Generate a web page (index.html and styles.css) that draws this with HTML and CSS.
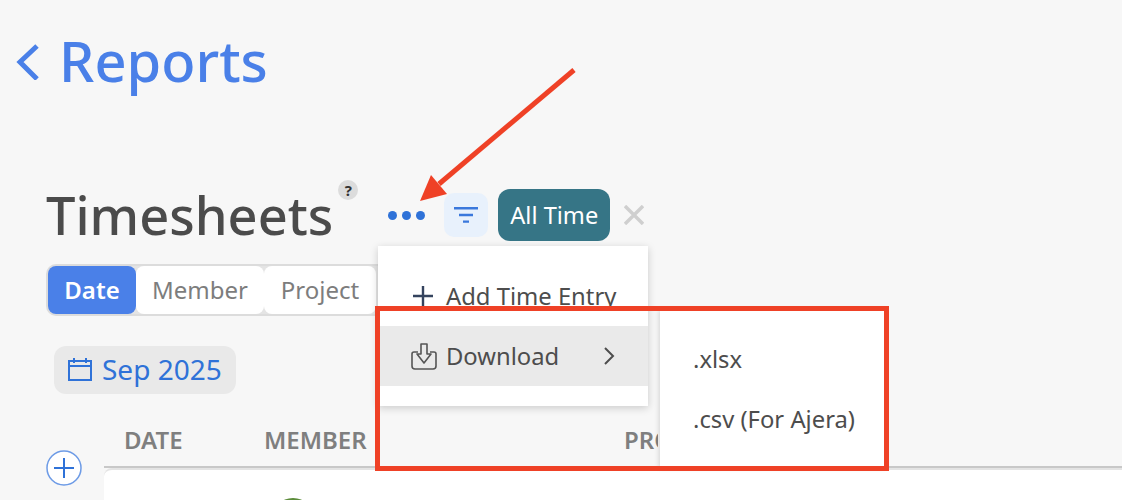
FILE: index.html
```html
<!DOCTYPE html>
<html lang="en">
<head>
  <meta charset="UTF-8">
  <title>Timesheets</title>
  <link rel="stylesheet" href="styles.css">
</head>
<body>

  <a class="back-link">
    <svg class="back-icon" width="24" height="36" viewBox="0 0 24 36"><path d="M22 2 L5 18 L22 35" fill="none" stroke="#4a80e8" stroke-width="5"/></svg>
    Reports
  </a>

  <div class="title-row">
    <h1 class="title">Timesheets</h1>
    <span class="help">?</span>
    <span class="dots"><i></i><i></i><i></i></span>
    <span class="filter-btn">
      <svg width="24" height="16" viewBox="0 0 24 16"><path d="M0 1.2h24M5 8h14M9 14.6h6" stroke="#3a78dc" stroke-width="2.4" fill="none"/></svg>
    </span>
    <span class="chip">All Time</span>
    <svg class="chip-close" width="20" height="20" viewBox="0 0 20 20"><path d="M1 1 L19 19 M19 1 L1 19" stroke="#cfcfcf" stroke-width="3.4"/></svg>
  </div>

  <div class="tabs">
    <span class="tab tab-active">Date</span>
    <span class="tab tab-member">Member</span>
    <span class="tab tab-project">Project</span>
  </div>

  <div class="month">
    <svg width="24" height="24" viewBox="0 0 24 24"><path d="M1 4h22v19H1zM1 9h22M6 1v5M18 1v5" fill="none" stroke="#2f72d8" stroke-width="2"/></svg>
    Sep 2025
  </div>

  <div class="table-area">
    <svg class="add-btn" width="36" height="36" viewBox="0 0 36 36"><circle cx="18" cy="18" r="17" fill="#fff" stroke="#6d9be6" stroke-width="1.5"/><path d="M18 8v20M8 18h20" stroke="#2f72d8" stroke-width="2"/></svg>
    <div class="table">
      <div class="table-head">
        <span class="col-date">DATE</span>
        <span class="col-member">MEMBER</span>
        <span class="col-project">PRO</span>
      </div>
      <div class="table-body"><span class="avatar"></span></div>
    </div>
  </div>

  <div class="menu">
    <div class="menu-item add-item">
      <svg width="22" height="22" viewBox="0 0 22 22"><path d="M11 1v20M1 11h20" stroke="#34435e" stroke-width="2.4"/></svg>
      Add Time Entry
    </div>
    <div class="menu-item download-item">
      <svg width="28" height="28" viewBox="0 0 28 28"><path d="M8 10H4Q2 10 2 12V24Q2 27 5 27H23Q26 27 26 24V12Q26 10 24 10H20" fill="none" stroke="#555" stroke-width="1.6"/><path d="M11 2h6v10h4l-7 9-7-9h4z" fill="none" stroke="#555" stroke-width="1.6" stroke-linejoin="round"/></svg>
      <span class="item-label">Download</span>
      <svg width="12" height="18" viewBox="0 0 12 18"><path d="M2 1l8 8-8 8" fill="none" stroke="#4d4d4d" stroke-width="2"/></svg>
    </div>
  </div>

  <div class="submenu">
    <div class="sub-item">.xlsx</div>
    <div class="sub-item">.csv (For Ajera)</div>
  </div>

  <div class="callout"></div>
  <svg class="arrow" width="170" height="140" viewBox="0 0 170 140">
    <path d="M155 2 L20 116" stroke="#ef4126" stroke-width="5"/>
    <path d="M1 133 L12 107 L28 126 Z" fill="#ef4126"/>
  </svg>

</body>
</html>
```

FILE: styles.css
```css
* {
  box-sizing: border-box;
}

html {
  height: 500px;
  overflow: hidden;
}

body {
  margin: 0;
  height: 500px;
  overflow: hidden;
  position: relative;
  background: #f7f7f7;
  font-family: 'Noto Sans', sans-serif;
  color: #4d4d4d;
}

.back-link {
  display: flex;
  align-items: flex-start;
  gap: 20px;
  padding: 24px 0 0 15px;
  height: 189px;
  font-size: 56px;
  font-weight: 500;
  line-height: 72px;
  color: #4a80e8;
}

.back-icon {
  margin-top: 20px;
}

.title-row {
  display: flex;
  align-items: center;
  height: 52px;
  padding-left: 46px;
}

.title {
  margin: 0;
  font-size: 52.4px;
  font-weight: 500;
  line-height: 52px;
  color: #4b4b4b;
}

.help {
  width: 20px;
  height: 20px;
  margin: -50px 0 0 5px;
  border-radius: 50%;
  background: #dcdcdc;
  color: #333;
  font-size: 15px;
  font-weight: 700;
  line-height: 20px;
  text-align: center;
}

.dots {
  display: flex;
  gap: 5px;
  margin: 0 0 0 30px;
}

.dots i {
  width: 9px;
  height: 9px;
  border-radius: 50%;
  background: #2f72d8;
}

.filter-btn {
  display: flex;
  align-items: center;
  justify-content: center;
  width: 44px;
  height: 44px;
  margin-left: 19px;
  border-radius: 10px;
  background: #e8f1fc;
}

.chip {
  height: 52px;
  margin-left: 10px;
  padding: 0 12px;
  border-radius: 12px;
  background: #367586;
  color: #fff;
  font-size: 23.6px;
  line-height: 52px;
}

.chip-close {
  margin-left: 14px;
}

.tabs {
  display: flex;
  width: 360px;
  height: 52px;
  margin: 23px 0 0 46px;
  padding: 2px 0;
  border: 2px solid #dcdcdc;
  border-radius: 10px;
  background: #e4e4e4;
  font-size: 24px;
}

.tab {
  height: 48px;
  margin: -2px 0;
  line-height: 48px;
  text-align: center;
  color: #7d7d7d;
  background: #fff;
  border-radius: 8px;
}

.tab-active {
  width: 88px;
  background: #4a80e8;
  color: #fff;
  font-weight: 600;
}

.tab-member {
  width: 128px;
}

.tab-project {
  width: 112px;
}

.month {
  display: inline-flex;
  align-items: center;
  gap: 10px;
  height: 48px;
  margin: 30px 0 0 54px;
  padding: 0 14px 2px;
  border-radius: 12px;
  background: #e9e9e9;
  color: #2f72d8;
  font-size: 28px;
}

.table-area {
  display: flex;
  margin: 26px 0 0 46px;
}

.add-btn {
  margin-top: 30px;
  flex: none;
}

.table {
  flex: 1;
  margin-left: 22px;
}

.table-head {
  display: flex;
  height: 48px;
  border-bottom: 2px solid #c8c8c8;
  color: #7f7f7f;
  font-size: 24px;
  font-weight: 600;
  line-height: 40px;
}

.col-date {
  width: 160px;
  padding-left: 20px;
}

.col-member {
  width: 360px;
}

/* the submenu covers the rest of this heading */
.col-project {
  width: 34px;
  height: 40px;
  overflow: hidden;
}

.table-body {
  height: 32px;
  overflow: hidden;
  padding: 28px 0 0 168px;
  background: #fff;
  border-top: 2px solid #e4e4e4;
  border-radius: 8px 0 0 0;
}

.avatar {
  display: block;
  width: 42px;
  height: 42px;
  border-radius: 50%;
  background: #5b8c3a;
}

.menu {
  position: absolute;
  left: 378px;
  top: 246px;
  width: 270px;
  height: 160px;
  padding-top: 20px;
  background: #fff;
  box-shadow: 0 2px 8px rgba(0,0,0,0.18);
  font-size: 23.8px;
}

.menu-item {
  display: flex;
  align-items: center;
  height: 60px;
}

.add-item {
  gap: 12px;
  padding-left: 34px;
}

.download-item {
  padding: 0 0 1px 32px;
  background: #eaeaea;
}

.item-label {
  width: 157px;
  margin-left: 8px;
}

.submenu {
  position: absolute;
  left: 660px;
  top: 310px;
  width: 226px;
  height: 158px;
  padding: 19px 0 0 33px;
  background: #fff;
  box-shadow: -1px 0 5px rgba(0,0,0,0.15);
  font-size: 23.8px;
}

.sub-item {
  height: 60px;
  line-height: 60px;
}

.callout {
  position: absolute;
  left: 375px;
  top: 306px;
  width: 514px;
  height: 165px;
  border: 5px solid #ef4126;
}

.arrow {
  position: absolute;
  left: 419px;
  top: 68px;
}
```
